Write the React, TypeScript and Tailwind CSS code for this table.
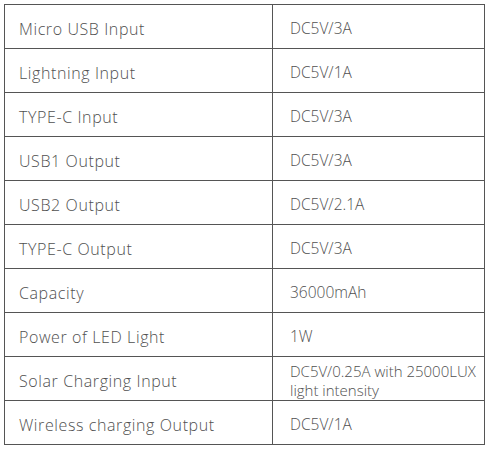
const rows: [string, string][] = [
  ['Micro USB Input', 'DC5V/3A'],
  ['Lightning Input', 'DC5V/1A'],
  ['TYPE-C Input', 'DC5V/3A'],
  ['USB1 Output', 'DC5V/3A'],
  ['USB2 Output', 'DC5V/2.1A'],
  ['TYPE-C Output', 'DC5V/3A'],
  ['Capacity', '36000mAh'],
  ['Power of LED Light', '1W'],
  ['Solar Charging Input', 'DC5V/0.25A with 25000LUX light intensity'],
  ['Wireless charging Output', 'DC5V/1A'],
];

export default function App() {
  return (
    <div className="w-[490px] h-[449px] bg-white pt-[4px] pl-[4px]" style={{ fontFamily: '"Open Sans", "Noto Sans", sans-serif' }}>
      <div className="w-[481px] border-l border-t border-r border-[#555]">
        {rows.map(([label, value], i) => (
          <div key={i} className="grid grid-cols-[268px_1fr] h-[44px] border-b border-[#555]">
            <div className="flex items-center pl-[14px] pt-[4px] border-r border-[#555] text-[16px] font-light tracking-[0.6px] text-[#505050]">
              {label}
            </div>
            {value.length > 20 ? (
              <div className="pl-[17px] pt-[5px] pr-[4px] text-[15px] leading-[19px] font-light text-[#505050]">
                {value}
              </div>
            ) : (
              <div className="flex items-center pl-[17px] pt-[4px] text-[15.5px] font-light text-[#505050]">
                {value}
              </div>
            )}
          </div>
        ))}
      </div>
    </div>
  );
}
